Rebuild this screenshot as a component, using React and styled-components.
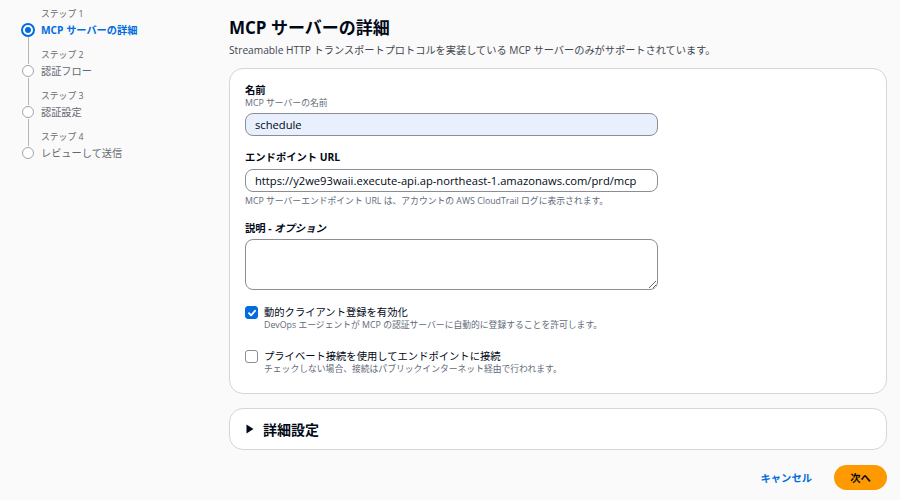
import React from 'react'
import styled, { createGlobalStyle } from 'styled-components'

const GlobalStyle = createGlobalStyle`
  html, body {
    margin: 0;
    padding: 0;
    background: #fafafa;
  }
  body {
    font-family: "Open Sans", "Noto Sans CJK JP", sans-serif;
    color: #000716;
  }
  * { box-sizing: border-box; }
`

const steps = [
    { label: 'ステップ 1', title: 'MCP サーバーの詳細' },
    { label: 'ステップ 2', title: '認証フロー' },
    { label: 'ステップ 3', title: '認証設定' },
    { label: 'ステップ 4', title: 'レビューして送信' },
]

export default function App() {
    return (
        <>
            <GlobalStyle />
            <Page>
                <Nav>
                    {steps.map((s, i) => (
                        <Step key={s.label} last={i === steps.length - 1}>
                            <Rail>
                                <Segment show={i > 0} />
                                <Dot active={i === 0} />
                                <Segment show={i < steps.length - 1} grow />
                            </Rail>
                            <StepText>
                                <StepLabel>{s.label}</StepLabel>
                                <StepTitle active={i === 0}>{s.title}</StepTitle>
                            </StepText>
                        </Step>
                    ))}
                </Nav>

                <Main>
                    <Title>MCP サーバーの詳細</Title>
                    <Subtitle>Streamable HTTP トランスポートプロトコルを実装している MCP サーバーのみがサポートされています。</Subtitle>

                    <Card>
                        <Label>名前</Label>
                        <Hint>MCP サーバーの名前</Hint>
                        <Input autofill defaultValue="schedule" readOnly />

                        <Label top={14}>エンドポイント URL</Label>
                        <Input defaultValue="https://y2we93waii.execute-api.ap-northeast-1.amazonaws.com/prd/mcp" readOnly style={{ marginTop: 5 }} />
                        <Hint top={3}>MCP サーバーエンドポイント URL は、アカウントの AWS CloudTrail ログに表示されます。</Hint>

                        <Label top={14}>説明 - <i>オプション</i></Label>
                        <TextArea readOnly />

                        <CheckRow top={15}>
                            <Box checked>
                                <svg width="10" height="10" viewBox="0 0 10 10">
                                    <path d="M2 5.2 L4.1 7.3 L8 2.8" fill="none" stroke="#fff" strokeWidth="1.8" strokeLinecap="round" strokeLinejoin="round" />
                                </svg>
                            </Box>
                            <div>
                                <CheckLabel>動的クライアント登録を有効化</CheckLabel>
                                <Hint>DevOps エージェントが MCP の認証サーバーに自動的に登録することを許可します。</Hint>
                            </div>
                        </CheckRow>

                        <CheckRow top={18}>
                            <Box />
                            <div>
                                <CheckLabel>プライベート接続を使用してエンドポイントに接続</CheckLabel>
                                <Hint>チェックしない場合、接続はパブリックインターネット経由で行われます。</Hint>
                            </div>
                        </CheckRow>
                    </Card>

                    <Accordion>
                        <Caret>
                            <svg width="8" height="10" viewBox="0 0 8 10">
                                <path d="M0.5 0.5 L7.5 5 L0.5 9.5 Z" fill="#000716" />
                            </svg>
                        </Caret>
                        <AccordionTitle>詳細設定</AccordionTitle>
                    </Accordion>

                    <Footer>
                        <LinkButton>キャンセル</LinkButton>
                        <PrimaryButton>次へ</PrimaryButton>
                    </Footer>
                </Main>
            </Page>
        </>
    )
}

const Page = styled.div`
    display: flex;
    width: 900px;
    height: 500px;
    overflow: hidden;
`

const Nav = styled.nav`
    width: 229px;
    flex-shrink: 0;
    padding: 8px 0 0 20px;
    display: flex;
    flex-direction: column;
`

const Step = styled.div`
    display: flex;
    gap: 5px;
    height: ${({ last }) => (last ? 'auto' : '41px')};
`

const Rail = styled.div`
    width: 16px;
    display: flex;
    flex-direction: column;
    align-items: center;
`

const Segment = styled.div`
    width: 1px;
    background: ${({ show }) => (show ? '#b4b4bb' : 'transparent')};
    height: ${({ grow }) => (grow ? 'auto' : '15px')};
    flex: ${({ grow }) => (grow ? 1 : '0 0 15px')};
`

const Dot = styled.div`
    width: ${({ active }) => (active ? '14px' : '12px')};
    height: ${({ active }) => (active ? '14px' : '12px')};
    margin: ${({ active }) => (active ? '0' : '1px 0')};
    border-radius: 50%;
    border: ${({ active }) => (active ? '2px' : '1.5px')} solid ${({ active }) => (active ? '#006ce0' : '#a4a4ad')};
    background: #fff;
    display: flex;
    align-items: center;
    justify-content: center;
    &::after {
        content: '';
        display: ${({ active }) => (active ? 'block' : 'none')};
        width: 6px;
        height: 6px;
        border-radius: 50%;
        background: #006ce0;
    }
`

const StepText = styled.div`
    display: flex;
    flex-direction: column;
`

const StepLabel = styled.div`
    font-size: 8.8px;
    line-height: 13px;
    color: #656871;
`

const StepTitle = styled.div`
    font-size: 10.2px;
    line-height: 18px;
    font-weight: ${({ active }) => (active ? 700 : 400)};
    color: ${({ active }) => (active ? '#006ce0' : '#656871')};
`

const Main = styled.main`
    flex: 1;
    padding: 16px 13px 0 0;
    display: flex;
    flex-direction: column;
`

const Title = styled.h1`
    margin: 0;
    font-size: 17px;
    line-height: 24px;
    font-weight: 700;
`

const Subtitle = styled.p`
    margin: 2px 0 0;
    font-size: 10.2px;
    line-height: 16px;
    color: #424650;
`

const Card = styled.section`
    margin-top: 10px;
    background: #fff;
    border: 1px solid #d5d5da;
    border-radius: 14px;
    padding: 14px 16px 18px 15px;
    display: flex;
    flex-direction: column;
    align-items: flex-start;
`

const Label = styled.div`
    margin-top: ${({ top }) => top || 0}px;
    font-size: 10.3px;
    line-height: 14px;
    font-weight: 700;
    i { font-style: italic; }
`

const Hint = styled.div`
    margin-top: ${({ top }) => top || 0}px;
    font-size: 8.8px;
    line-height: 12px;
    color: #5f6b7a;
`

const Input = styled.input`
    margin-top: 4px;
    width: 413px;
    height: 23px;
    padding: 0 9px;
    border: 1px solid #8c8c94;
    border-radius: 8px;
    background: ${({ autofill }) => (autofill ? '#e8f0fe' : '#fff')};
    font-family: inherit;
    font-size: 11.2px;
    font-weight: 500;
    color: #000716;
    outline: none;
`

const TextArea = styled.textarea`
    margin-top: 4px;
    width: 413px;
    height: 51px;
    border: 1px solid #8c8c94;
    border-radius: 8px;
    background: #fff;
    outline: none;
    font-family: inherit;
`

const CheckRow = styled.div`
    margin-top: ${({ top }) => top}px;
    display: flex;
    gap: 6px;
    align-items: flex-start;
`

const Box = styled.div`
    margin-top: 1px;
    width: 13px;
    height: 13px;
    border-radius: 3px;
    flex-shrink: 0;
    display: flex;
    align-items: center;
    justify-content: center;
    background: ${({ checked }) => (checked ? '#006ce0' : '#fff')};
    border: 1px solid ${({ checked }) => (checked ? '#006ce0' : '#8c8c94')};
`

const CheckLabel = styled.div`
    font-size: 10.3px;
    line-height: 14px;
`

const Accordion = styled.section`
    margin-top: 14px;
    height: 42px;
    flex-shrink: 0;
    background: #fff;
    border: 1px solid #d5d5da;
    border-radius: 14px;
    display: flex;
    align-items: center;
    padding-left: 16px;
    gap: 9px;
`

const Caret = styled.span`
    display: flex;
    align-items: center;
`

const AccordionTitle = styled.span`
    font-size: 14px;
    font-weight: 700;
`

const Footer = styled.div`
    margin-top: 15px;
    display: flex;
    justify-content: flex-end;
    align-items: center;
    gap: 12px;
`

const LinkButton = styled.button`
    border: none;
    background: none;
    padding: 0 10px;
    height: 25px;
    font-family: inherit;
    font-size: 10.3px;
    font-weight: 700;
    color: #006ce0;
`

const PrimaryButton = styled.button`
    width: 53px;
    height: 25px;
    border: none;
    border-radius: 20px;
    background: #ff9900;
    font-family: inherit;
    font-size: 10.3px;
    font-weight: 700;
    color: #000716;
`
